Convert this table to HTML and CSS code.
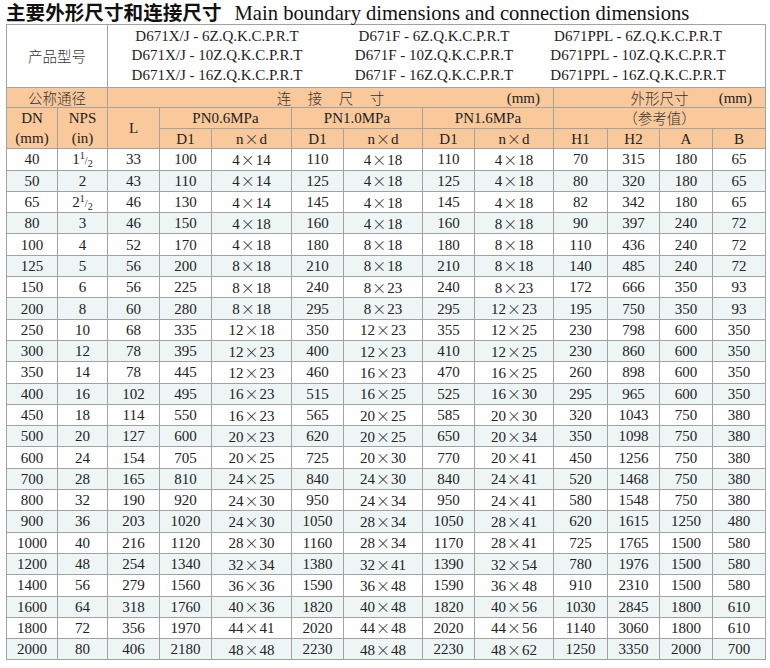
FILE: index.html
```html
<!DOCTYPE html>
<html lang="zh">
<head>
<meta charset="utf-8">
<title>主要外形尺寸和连接尺寸</title>
<link rel="stylesheet" href="styles.css">
</head>
<body>
<div class="page">
  <h1 class="title"><span class="title-zh">主要外形尺寸和连接尺寸</span><span class="title-en">Main boundary dimensions and connection dimensions</span></h1>
  <table class="dims">
    <colgroup>
      <col style="width:51px"><col style="width:50px"><col style="width:52px">
      <col style="width:52px"><col style="width:80px"><col style="width:52px">
      <col style="width:79px"><col style="width:52px"><col style="width:79px">
      <col style="width:54px"><col style="width:52px"><col style="width:53px"><col style="width:53px">
    </colgroup>
    <thead>
      <tr class="models">
        <td colspan="2" class="zh">产品型号</td>
        <td colspan="11" class="model-cell">
          <div class="model-grid">
            <span>D671X/J - 6Z.Q.K.C.P.R.T</span><span>D671F - 6Z.Q.K.C.P.R.T</span><span>D671PPL - 6Z.Q.K.C.P.R.T</span>
            <span>D671X/J - 10Z.Q.K.C.P.R.T</span><span>D671F - 10Z.Q.K.C.P.R.T</span><span>D671PPL - 10Z.Q.K.C.P.R.T</span>
            <span>D671X/J - 16Z.Q.K.C.P.R.T</span><span>D671F - 16Z.Q.K.C.P.R.T</span><span>D671PPL - 16Z.Q.K.C.P.R.T</span>
          </div>
        </td>
      </tr>
      <tr class="head">
        <td colspan="2" class="zh">公称通径</td>
        <td colspan="7"><div class="split"><span></span><span class="zh spaced">连接尺寸</span><span class="unit">(mm)</span></div></td>
        <td colspan="4"><div class="split"><span></span><span class="zh">外形尺寸</span><span class="unit">(mm)</span></div></td>
      </tr>
      <tr class="head">
        <td rowspan="2" class="two">DN<br>(mm)</td>
        <td rowspan="2" class="two">NPS<br>(in)</td>
        <td rowspan="2">L</td>
        <td colspan="2">PN0.6MPa</td>
        <td colspan="2">PN1.0MPa</td>
        <td colspan="2">PN1.6MPa</td>
        <td colspan="4" class="zh">（参考值）</td>
      </tr>
      <tr class="head">
        <td>D1</td><td>n<span class="x">×</span>d</td>
        <td>D1</td><td>n<span class="x">×</span>d</td>
        <td>D1</td><td>n<span class="x">×</span>d</td>
        <td>H1</td><td>H2</td><td>A</td><td>B</td>
      </tr>
    </thead>
    <tbody>
      <tr><td>40</td><td>1<span class="frac"><span class="up">1</span>/<span class="dn">2</span></span></td><td>33</td><td>100</td><td>4<span class="x">×</span>14</td><td>110</td><td>4<span class="x">×</span>18</td><td>110</td><td>4<span class="x">×</span>18</td><td>70</td><td>315</td><td>180</td><td>65</td></tr>
      <tr><td>50</td><td>2</td><td>43</td><td>110</td><td>4<span class="x">×</span>14</td><td>125</td><td>4<span class="x">×</span>18</td><td>125</td><td>4<span class="x">×</span>18</td><td>80</td><td>320</td><td>180</td><td>65</td></tr>
      <tr><td>65</td><td>2<span class="frac"><span class="up">1</span>/<span class="dn">2</span></span></td><td>46</td><td>130</td><td>4<span class="x">×</span>14</td><td>145</td><td>4<span class="x">×</span>18</td><td>145</td><td>4<span class="x">×</span>18</td><td>82</td><td>342</td><td>180</td><td>65</td></tr>
      <tr><td>80</td><td>3</td><td>46</td><td>150</td><td>4<span class="x">×</span>18</td><td>160</td><td>4<span class="x">×</span>18</td><td>160</td><td>8<span class="x">×</span>18</td><td>90</td><td>397</td><td>240</td><td>72</td></tr>
      <tr><td>100</td><td>4</td><td>52</td><td>170</td><td>4<span class="x">×</span>18</td><td>180</td><td>8<span class="x">×</span>18</td><td>180</td><td>8<span class="x">×</span>18</td><td>110</td><td>436</td><td>240</td><td>72</td></tr>
      <tr><td>125</td><td>5</td><td>56</td><td>200</td><td>8<span class="x">×</span>18</td><td>210</td><td>8<span class="x">×</span>18</td><td>210</td><td>8<span class="x">×</span>18</td><td>140</td><td>485</td><td>240</td><td>72</td></tr>
      <tr><td>150</td><td>6</td><td>56</td><td>225</td><td>8<span class="x">×</span>18</td><td>240</td><td>8<span class="x">×</span>23</td><td>240</td><td>8<span class="x">×</span>23</td><td>172</td><td>666</td><td>350</td><td>93</td></tr>
      <tr><td>200</td><td>8</td><td>60</td><td>280</td><td>8<span class="x">×</span>18</td><td>295</td><td>8<span class="x">×</span>23</td><td>295</td><td>12<span class="x">×</span>23</td><td>195</td><td>750</td><td>350</td><td>93</td></tr>
      <tr><td>250</td><td>10</td><td>68</td><td>335</td><td>12<span class="x">×</span>18</td><td>350</td><td>12<span class="x">×</span>23</td><td>355</td><td>12<span class="x">×</span>25</td><td>230</td><td>798</td><td>600</td><td>350</td></tr>
      <tr><td>300</td><td>12</td><td>78</td><td>395</td><td>12<span class="x">×</span>23</td><td>400</td><td>12<span class="x">×</span>23</td><td>410</td><td>12<span class="x">×</span>25</td><td>230</td><td>860</td><td>600</td><td>350</td></tr>
      <tr><td>350</td><td>14</td><td>78</td><td>445</td><td>12<span class="x">×</span>23</td><td>460</td><td>16<span class="x">×</span>23</td><td>470</td><td>16<span class="x">×</span>25</td><td>260</td><td>898</td><td>600</td><td>350</td></tr>
      <tr><td>400</td><td>16</td><td>102</td><td>495</td><td>16<span class="x">×</span>23</td><td>515</td><td>16<span class="x">×</span>25</td><td>525</td><td>16<span class="x">×</span>30</td><td>295</td><td>965</td><td>600</td><td>350</td></tr>
      <tr><td>450</td><td>18</td><td>114</td><td>550</td><td>16<span class="x">×</span>23</td><td>565</td><td>20<span class="x">×</span>25</td><td>585</td><td>20<span class="x">×</span>30</td><td>320</td><td>1043</td><td>750</td><td>380</td></tr>
      <tr><td>500</td><td>20</td><td>127</td><td>600</td><td>20<span class="x">×</span>23</td><td>620</td><td>20<span class="x">×</span>25</td><td>650</td><td>20<span class="x">×</span>34</td><td>350</td><td>1098</td><td>750</td><td>380</td></tr>
      <tr><td>600</td><td>24</td><td>154</td><td>705</td><td>20<span class="x">×</span>25</td><td>725</td><td>20<span class="x">×</span>30</td><td>770</td><td>20<span class="x">×</span>41</td><td>450</td><td>1256</td><td>750</td><td>380</td></tr>
      <tr><td>700</td><td>28</td><td>165</td><td>810</td><td>24<span class="x">×</span>25</td><td>840</td><td>24<span class="x">×</span>30</td><td>840</td><td>24<span class="x">×</span>41</td><td>520</td><td>1468</td><td>750</td><td>380</td></tr>
      <tr><td>800</td><td>32</td><td>190</td><td>920</td><td>24<span class="x">×</span>30</td><td>950</td><td>24<span class="x">×</span>34</td><td>950</td><td>24<span class="x">×</span>41</td><td>580</td><td>1548</td><td>750</td><td>380</td></tr>
      <tr><td>900</td><td>36</td><td>203</td><td>1020</td><td>24<span class="x">×</span>30</td><td>1050</td><td>28<span class="x">×</span>34</td><td>1050</td><td>28<span class="x">×</span>41</td><td>620</td><td>1615</td><td>1250</td><td>480</td></tr>
      <tr><td>1000</td><td>40</td><td>216</td><td>1120</td><td>28<span class="x">×</span>30</td><td>1160</td><td>28<span class="x">×</span>34</td><td>1170</td><td>28<span class="x">×</span>41</td><td>725</td><td>1765</td><td>1500</td><td>580</td></tr>
      <tr><td>1200</td><td>48</td><td>254</td><td>1340</td><td>32<span class="x">×</span>34</td><td>1380</td><td>32<span class="x">×</span>41</td><td>1390</td><td>32<span class="x">×</span>54</td><td>780</td><td>1976</td><td>1500</td><td>580</td></tr>
      <tr><td>1400</td><td>56</td><td>279</td><td>1560</td><td>36<span class="x">×</span>36</td><td>1590</td><td>36<span class="x">×</span>48</td><td>1590</td><td>36<span class="x">×</span>48</td><td>910</td><td>2310</td><td>1500</td><td>580</td></tr>
      <tr><td>1600</td><td>64</td><td>318</td><td>1760</td><td>40<span class="x">×</span>36</td><td>1820</td><td>40<span class="x">×</span>48</td><td>1820</td><td>40<span class="x">×</span>56</td><td>1030</td><td>2845</td><td>1800</td><td>610</td></tr>
      <tr><td>1800</td><td>72</td><td>356</td><td>1970</td><td>44<span class="x">×</span>41</td><td>2020</td><td>44<span class="x">×</span>48</td><td>2020</td><td>44<span class="x">×</span>56</td><td>1140</td><td>3060</td><td>1800</td><td>610</td></tr>
      <tr><td>2000</td><td>80</td><td>406</td><td>2180</td><td>48<span class="x">×</span>48</td><td>2230</td><td>48<span class="x">×</span>48</td><td>2230</td><td>48<span class="x">×</span>62</td><td>1250</td><td>3350</td><td>2000</td><td>700</td></tr>
    </tbody>
  </table>
</div>
</body>
</html>
```

FILE: styles.css
```css
html, body {
  margin: 0;
  padding: 0;
  background: #ffffff;
}

body {
  color: #222222;
  font-family: "Liberation Serif", "Noto Sans CJK SC", serif;
}

.page {
  padding-left: 6px;
}

.title {
  display: flex;
  align-items: baseline;
  gap: 13px;
  margin: 0;
  height: 24px;
  line-height: 24px;
  font-weight: normal;
  white-space: nowrap;
  color: #111111;
}

.title-zh {
  font-family: "Noto Sans CJK SC", sans-serif;
  font-weight: 700;
  font-size: 19.6px;
}

.title-en {
  font-family: "Liberation Serif", serif;
  font-size: 20.6px;
}

.dims {
  border-collapse: collapse;
  table-layout: fixed;
  width: 759px;
  font-size: 15px;
}

.dims td {
  border: 1px solid #a2a2a2;
  text-align: center;
  vertical-align: middle;
  padding: 0;
  line-height: 18px;
  white-space: nowrap;
  overflow: hidden;
}

.zh {
  font-family: "Noto Sans CJK SC", sans-serif;
  font-weight: 300;
  font-size: 14.5px;
  color: #333333;
}

.models {
  height: 63px;
}

.model-grid {
  display: grid;
  grid-template-columns: 218px 216px 192px;
  line-height: 19.5px;
}

.head td {
  background: #fac99b;
  height: 19.3px;
}

.head td.two {
  line-height: 20px;
}

.split {
  display: grid;
  grid-template-columns: 1fr auto 1fr;
  align-items: center;
}

.split .unit {
  justify-self: end;
  padding-right: 13px;
}

.spaced {
  letter-spacing: 16.5px;
  margin-right: -16.5px;
}

.x {
  font-family: "Noto Sans CJK SC", sans-serif;
  font-weight: 300;
  font-size: 14px;
  margin: 0 1px;
}

.frac {
  font-size: 10px;
  line-height: 0;
}

.frac .up {
  position: relative;
  top: -5px;
}

.frac .dn {
  position: relative;
  top: 3px;
}

.dims tbody tr {
  height: 21.3px;
}

.dims tbody tr:nth-child(even) td {
  background: #edf5f5;
}
```
